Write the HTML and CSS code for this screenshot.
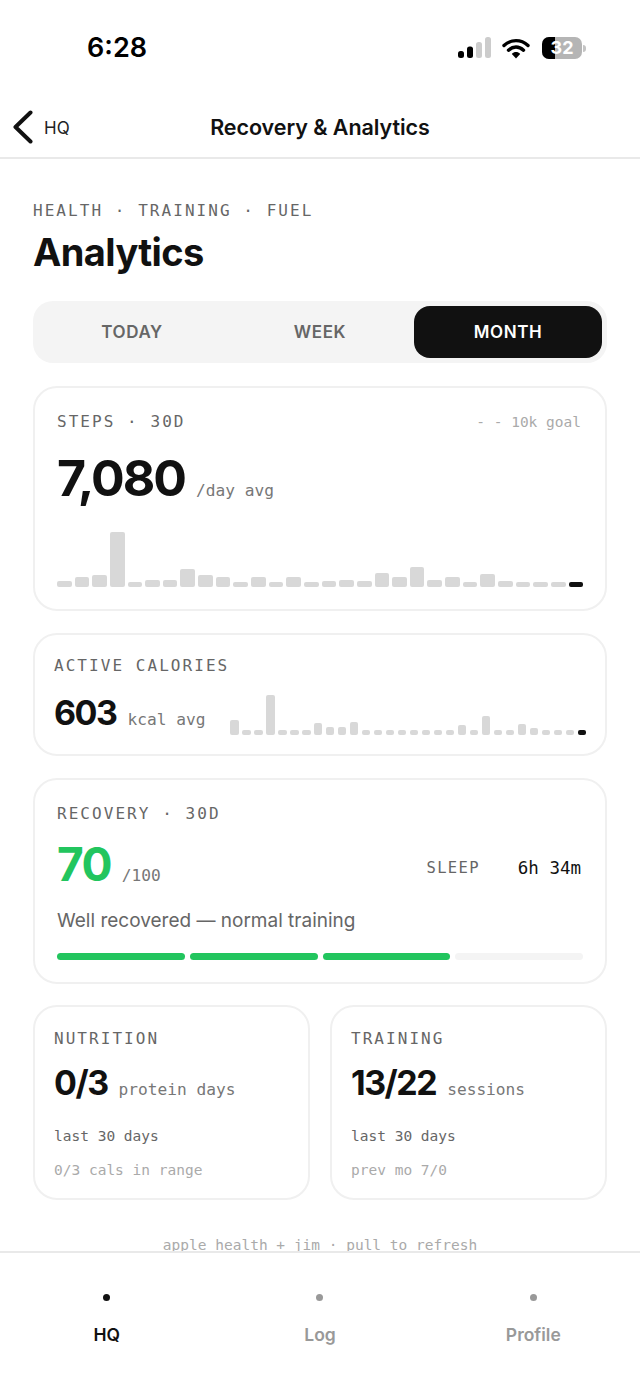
FILE: index.html
```html
<!DOCTYPE html>
<html lang="en">
<head>
<meta charset="utf-8" />
<title>Recovery &amp; Analytics</title>
<link rel="stylesheet" href="styles.css">
</head>
<body>
<div class="screen">
	<div class="status">
		<span class="time">6:28</span>
		<div class="status-icons">
			<svg class="signal" width="33" height="22" viewBox="0 0 33 22">
				<rect x="0" y="14" width="6" height="7" rx="2.5" fill="#000"/>
				<rect x="9" y="9.5" width="6" height="11.5" rx="2.5" fill="#000"/>
				<rect x="18" y="5" width="6" height="16" rx="2.5" fill="#ccc"/>
				<rect x="27" y="0" width="6" height="21" rx="2.5" fill="#ccc"/>
			</svg>
			<svg class="wifi" width="28" height="21" viewBox="0 0 28 21">
				<path d="M2 7.5C9 1 19 1 26 7.5M6.5 12.2C11 8 17 8 21.5 12.2" fill="none" stroke="#000" stroke-width="3.4" stroke-linecap="round"/>
				<path d="M9.8 16C12.2 13.4 15.8 13.4 18.2 16L14 20.6Z" fill="#000"/>
			</svg>
			<div class="battery">
				<div class="battery-level"></div>
				<span class="battery-num">32</span>
			</div>
			<div class="battery-tip"></div>
		</div>
	</div>

	<div class="nav">
		<a class="back" href="#">
			<svg width="22" height="34" viewBox="0 0 22 34"><path d="M18.5 2.5L3.5 17L18.5 31.5" fill="none" stroke="#111" stroke-width="4" stroke-linecap="round" stroke-linejoin="round"/></svg>
			<span>HQ</span>
		</a>
		<h1 class="nav-title">Recovery &amp; Analytics</h1>
	</div>

	<div class="main">
		<div class="eyebrow">HEALTH · TRAINING · FUEL</div>
		<h2 class="title">Analytics</h2>

		<div class="tabs">
			<a class="tab" href="#">TODAY</a>
			<a class="tab" href="#">WEEK</a>
			<a class="tab on" href="#">MONTH</a>
		</div>

		<div class="card card-steps">
			<div class="card-head">
				<span class="label">STEPS · 30D</span>
				<span class="goal">- - 10k goal</span>
			</div>
			<div class="stat">
				<strong class="num-big">7,080</strong>
				<span class="unit">/day avg</span>
			</div>
			<div class="bars bars-steps">
				<i style="height:6px"></i><i style="height:10px"></i><i style="height:12px"></i><i style="height:55px"></i><i style="height:5px"></i><i style="height:7px"></i><i style="height:7px"></i><i style="height:18px"></i><i style="height:12px"></i><i style="height:10px"></i><i style="height:5px"></i><i style="height:10px"></i><i style="height:5px"></i><i style="height:10px"></i><i style="height:5px"></i><i style="height:6px"></i><i style="height:7px"></i><i style="height:6px"></i><i style="height:14px"></i><i style="height:10px"></i><i style="height:20px"></i><i style="height:7px"></i><i style="height:10px"></i><i style="height:5px"></i><i style="height:13px"></i><i style="height:6px"></i><i style="height:5px"></i><i style="height:5px"></i><i style="height:5px"></i><i class="now" style="height:5px"></i>
			</div>
		</div>

		<div class="card card-cal">
			<div class="label">ACTIVE CALORIES</div>
			<div class="cal-row">
				<div class="stat">
					<strong class="num-mid">603</strong>
					<span class="unit">kcal avg</span>
				</div>
				<div class="bars bars-cal">
					<i style="height:15px"></i><i style="height:5px"></i><i style="height:5px"></i><i style="height:40px"></i><i style="height:5px"></i><i style="height:5px"></i><i style="height:5px"></i><i style="height:12px"></i><i style="height:8px"></i><i style="height:8px"></i><i style="height:13px"></i><i style="height:5px"></i><i style="height:5px"></i><i style="height:5px"></i><i style="height:5px"></i><i style="height:5px"></i><i style="height:5px"></i><i style="height:5px"></i><i style="height:5px"></i><i style="height:10px"></i><i style="height:5px"></i><i style="height:19px"></i><i style="height:5px"></i><i style="height:5px"></i><i style="height:11px"></i><i style="height:7px"></i><i style="height:5px"></i><i style="height:5px"></i><i style="height:5px"></i><i class="now" style="height:5px"></i>
				</div>
			</div>
		</div>

		<div class="card card-rec">
			<div class="label">RECOVERY · 30D</div>
			<div class="rec-row">
				<div class="stat">
					<strong class="num-rec">70</strong>
					<span class="unit">/100</span>
				</div>
				<div class="sleep">
					<span class="sleep-label">SLEEP</span>
					<span class="sleep-val">6h 34m</span>
				</div>
			</div>
			<p class="rec-text">Well recovered — normal training</p>
			<div class="segs">
				<i class="fill"></i><i class="fill"></i><i class="fill"></i><i></i>
			</div>
		</div>

		<div class="pair">
			<div class="card card-small">
				<div class="label">NUTRITION</div>
				<div class="stat">
					<strong class="num-mid">0/3</strong>
					<span class="unit">protein days</span>
				</div>
				<div class="note">last 30 days</div>
				<div class="note faint">0/3 cals in range</div>
			</div>
			<div class="card card-small">
				<div class="label">TRAINING</div>
				<div class="stat">
					<strong class="num-mid">13/22</strong>
					<span class="unit">sessions</span>
				</div>
				<div class="note">last 30 days</div>
				<div class="note faint">prev mo 7/0</div>
			</div>
		</div>

		<div class="foot-note">apple health + jim · pull to refresh</div>
	</div>

	<div class="tabbar">
		<a class="tb on" href="#"><b></b>HQ</a>
		<a class="tb" href="#"><b></b>Log</a>
		<a class="tb" href="#"><b></b>Profile</a>
	</div>
</div>
</body>
</html>
```

FILE: styles.css
```css
*{
	margin:0;
	padding:0;
	box-sizing:border-box;
}
body{
	background:#fff;
	color:#111;
	font-family:"Inter","Liberation Sans",sans-serif;
}
a{
	color:inherit;
	text-decoration:none;
}
.screen{
	width:640px;
	height:1387px;
	display:flex;
	flex-direction:column;
	overflow:hidden;
}

/* status bar */
.status{
	height:100px;
	display:flex;
	justify-content:space-between;
	padding:30px 54px 0 87px;
}
.time{
	font-size:27px;
	font-weight:600;
	line-height:36px;
	color:#000;
}
.status-icons{
	display:flex;
	align-items:center;
	height:36px;
}
.wifi{
	margin-left:11px;
}
.battery{
	position:relative;
	width:40px;
	height:22px;
	margin-left:12px;
	border-radius:7px;
	background:#b5b5b5;
	overflow:hidden;
}
.battery-level{
	width:13px;
	height:22px;
	background:#000;
}
.battery-num{
	position:absolute;
	left:0;
	right:0;
	top:0;
	text-align:center;
	font-size:18px;
	font-weight:700;
	line-height:22px;
	color:#fff;
}
.battery-tip{
	width:3px;
	height:7px;
	margin-left:1px;
	border-radius:0 3px 3px 0;
	background:#c4c4c4;
}

/* nav */
.nav{
	position:relative;
	height:59px;
	display:flex;
	align-items:center;
	justify-content:center;
	border-bottom:2px solid #e9e9e9;
}
.back{
	position:absolute;
	left:12px;
	top:10px;
	display:flex;
	align-items:center;
	gap:10px;
	font-size:17px;
	color:#222;
}
.back span{
	margin-top:2px;
}
.nav-title{
	font-size:21.5px;
	font-weight:600;
	letter-spacing:-0.05px;
	margin-top:-3px;
}

/* main */
.main{
	flex:1;
	min-height:0;
	padding:42px 33px 0;
}
.eyebrow,.label,.sleep-label{
	font-family:"DejaVu Sans Mono","Liberation Mono",monospace;
	font-size:16px;
	letter-spacing:2.05px;
	line-height:20px;
	color:#666;
}
.title{
	font-size:38px;
	font-weight:700;
	letter-spacing:-0.6px;
	line-height:46px;
	margin-top:8px;
}
.tabs{
	display:flex;
	height:62px;
	margin-top:26px;
	padding:5px;
	border-radius:20px;
	background:#f4f4f4;
}
.tab{
	flex:1;
	display:flex;
	align-items:center;
	justify-content:center;
	border-radius:16px;
	font-size:17px;
	font-weight:600;
	letter-spacing:0.6px;
	color:#666;
}
.tab.on{
	background:#111;
	color:#fff;
}

/* cards */
.card{
	margin-top:22px;
	border:2px solid #f0f0f0;
	border-radius:24px;
	background:#fff;
}
.card-steps{
	height:225px;
	margin-top:23px;
	padding:24px 22px 0;
}
.card-head{
	display:flex;
	justify-content:space-between;
	align-items:center;
}
.goal{
	margin-right:2px;
	font-family:"DejaVu Sans Mono","Liberation Mono",monospace;
	font-size:14.5px;
	color:#aaa;
}
.stat{
	display:flex;
	align-items:baseline;
	gap:11px;
}
.num-big{
	font-size:50px;
	font-weight:700;
	letter-spacing:-2px;
	line-height:60px;
}
.num-rec{
	font-size:46px;
	font-weight:700;
	letter-spacing:-1.6px;
	line-height:60px;
	color:#22c55e;
}
.num-mid{
	font-size:34px;
	font-weight:700;
	letter-spacing:-1.5px;
	line-height:44px;
}
.unit{
	font-family:"DejaVu Sans Mono","Liberation Mono",monospace;
	font-size:16.2px;
	color:#777;
}
.card-steps .stat{
	margin-top:16px;
}
.bars{
	display:flex;
	align-items:flex-end;
}
.bars i{
	flex:1;
	background:#d8d8d8;
	border-radius:2px;
}
.bars i.now{
	background:#111;
}
.bars-steps{
	gap:3px;
	height:56px;
	margin-top:23px;
}
.card-cal{
	height:123px;
	padding:21px 19px 0;
}
.cal-row{
	display:flex;
	align-items:flex-end;
	justify-content:space-between;
	margin-top:15px;
}
.bars-cal{
	gap:3.4px;
	width:356px;
	height:40px;
}
.card-rec{
	height:206px;
	padding:24px 22px 0;
}
.rec-row{
	display:flex;
	justify-content:space-between;
	align-items:center;
	margin-top:10px;
}
.sleep{
	display:flex;
	align-items:center;
	gap:38px;
	margin-top:8px;
	margin-right:2px;
}
.sleep-label{
	font-size:15.5px;
	letter-spacing:1.3px;
}
.sleep-val{
	font-family:"DejaVu Sans Mono","Liberation Mono",monospace;
	font-size:17.5px;
	color:#111;
}
.rec-text{
	margin-top:13px;
	font-size:19px;
	line-height:28px;
	color:#666;
}
.segs{
	display:flex;
	gap:5px;
	margin-top:18px;
}
.segs i{
	flex:1;
	height:7px;
	border-radius:4px;
	background:#f4f4f4;
}
.segs i.fill{
	background:#22c55e;
}
.pair{
	display:grid;
	grid-template-columns:1fr 1fr;
	gap:20px;
	margin-top:21px;
}
.card-small{
	height:195px;
	margin-top:0;
	padding:22px 19px 0;
}
.card-small .stat{
	margin-top:12px;
}
.card-small .stat + .note{
	margin-top:21px;
}
.note{
	margin-top:14px;
	font-family:"DejaVu Sans Mono","Liberation Mono",monospace;
	font-size:14.5px;
	line-height:20px;
	color:#666;
}
.note.faint{
	color:#aaa;
}
.foot-note{
	margin-top:35px;
	text-align:center;
	font-family:"DejaVu Sans Mono","Liberation Mono",monospace;
	font-size:14.5px;
	line-height:20px;
	color:#aaa;
}

/* tab bar */
.tabbar{
	height:136px;
	display:flex;
	padding-top:41px;
	border-top:2px solid #e9e9e9;
}
.tb{
	flex:1;
	display:flex;
	flex-direction:column;
	align-items:center;
	gap:23px;
	font-size:17.5px;
	font-weight:600;
	line-height:22px;
	color:#999;
}
.tb b{
	width:7px;
	height:7px;
	border-radius:50%;
	background:#999;
}
.tb.on{
	color:#111;
}
.tb.on b{
	background:#111;
}
```
